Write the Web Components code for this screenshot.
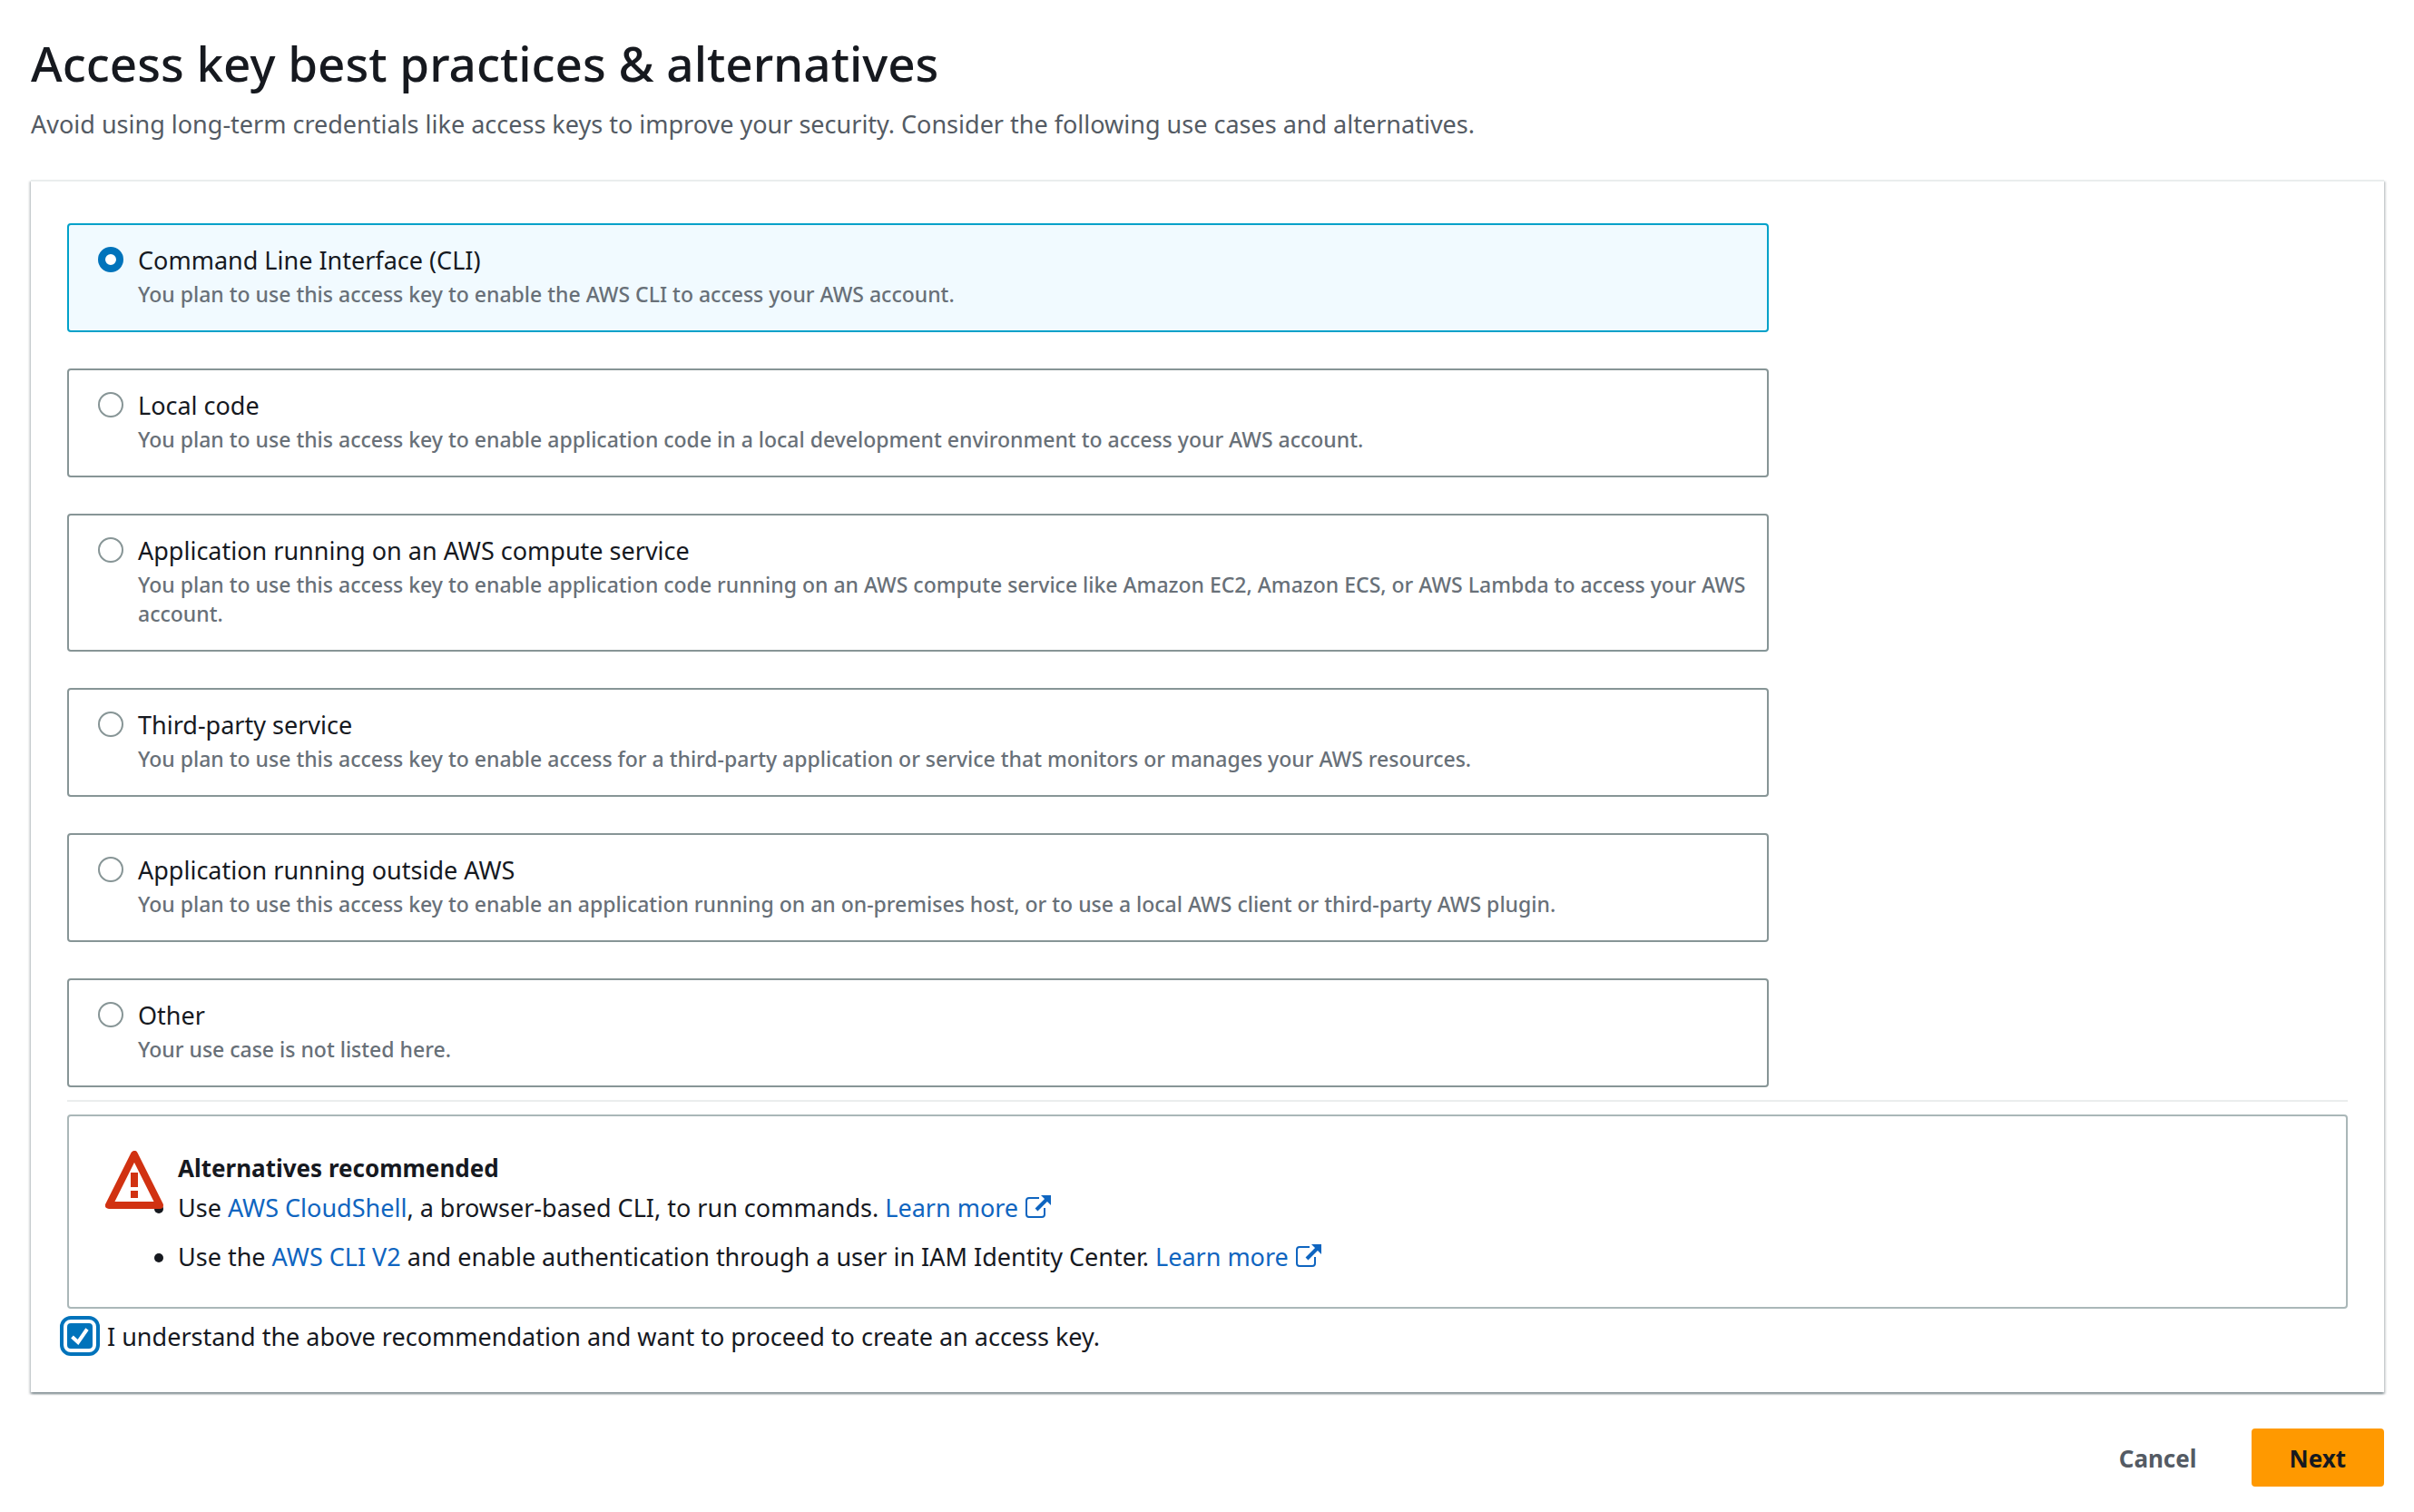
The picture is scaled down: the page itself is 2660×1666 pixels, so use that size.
<!DOCTYPE html>
<html lang="en">
<head>
<meta charset="utf-8">
<meta name="viewport" content="width=device-width, initial-scale=1">
<title>Access key best practices &amp; alternatives</title>
<style>
  body {
    margin: 0;
    background: #fff;
    color: #16191f;
    font-family: "Noto Sans", "Open Sans", sans-serif;
    font-size: 27px;
    line-height: 44px;
  }
</style>
</head>
<body>
<access-key-page></access-key-page>

<template id="access-key-page">
  <style>
    :host { display: block; padding: 34px 33px 28px 34px; }
    main { display: flex; flex-direction: column; gap: 40px; }
    .options { display: flex; flex-direction: column; gap: 40px; width: calc(75% - 10px); }
    hr { margin: 14px 0; border: 0; border-top: 2px solid #eaeded; }
    confirm-box { margin-top: 9px; }
    footer { display: flex; justify-content: flex-end; gap: 18px; }
  </style>
  <main>
    <page-header>
      Access key best practices &amp; alternatives
      <span slot="description">Avoid using long-term credentials like access keys to improve your security. Consider the following use cases and alternatives.</span>
    </page-header>
    <content-card>
      <div class="options" role="radiogroup" aria-label="Use case">
        <option-tile checked>Command Line Interface (CLI)<span slot="description">You plan to use this access key to enable the AWS CLI to access your AWS account.</span></option-tile>
        <option-tile>Local code<span slot="description">You plan to use this access key to enable application code in a local development environment to access your AWS account.</span></option-tile>
        <option-tile>Application running on an AWS compute service<span slot="description">You plan to use this access key to enable application code running on an AWS compute service like Amazon EC2, Amazon ECS, or AWS Lambda to access your AWS account.</span></option-tile>
        <option-tile>Third-party service<span slot="description">You plan to use this access key to enable access for a third-party application or service that monitors or manages your AWS resources.</span></option-tile>
        <option-tile>Application running outside AWS<span slot="description">You plan to use this access key to enable an application running on an on-premises host, or to use a local AWS client or third-party AWS plugin.</span></option-tile>
        <option-tile>Other<span slot="description">Your use case is not listed here.</span></option-tile>
      </div>
      <hr>
      <recommendation-alert>
        <span slot="heading">Alternatives recommended</span>
        <recommendation-item>Use <text-link>AWS CloudShell</text-link>, a browser-based CLI, to run commands. <text-link external>Learn more</text-link></recommendation-item>
        <recommendation-item>Use the <text-link>AWS CLI V2</text-link> and enable authentication through a user in IAM Identity Center. <text-link external>Learn more</text-link></recommendation-item>
      </recommendation-alert>
      <confirm-box>I understand the above recommendation and want to proceed to create an access key.</confirm-box>
    </content-card>
    <footer>
      <action-button>Cancel</action-button>
      <action-button variant="primary">Next</action-button>
    </footer>
  </main>
</template>

<template id="page-header">
  <style>
    :host { display: block; }
    h1 { margin: 0 0 10px; font-size: 53px; line-height: 72px; font-weight: 500; }
    p { margin: 0; color: #545b64; line-height: 42px; }
  </style>
  <h1><slot></slot></h1>
  <p><slot name="description"></slot></p>
</template>

<template id="content-card">
  <style>
    :host {
      display: block;
      padding: 46px 40px 39px;
      border-top: 2px solid #eaeded;
      background: #fff;
      box-shadow: 0 2px 2px rgba(0, 28, 36, .3), 2px 2px 2px rgba(0, 28, 36, .15), -2px 2px 2px rgba(0, 28, 36, .15);
    }
  </style>
  <slot></slot>
</template>

<template id="option-tile">
  <style>
    :host {
      display: block;
      border: 2px solid #879596;
      border-radius: 4px;
      background: #fff;
    }
    :host([checked]) { border-color: #00a1c9; background: #f1faff; }
    label { display: flex; gap: 16px; padding: 18px 16px 24px 32px; line-height: 42px; cursor: pointer; }
    input {
      appearance: none;
      flex: none;
      width: 28px;
      height: 28px;
      margin: 6px 0 0;
      border: 2px solid #879596;
      border-radius: 50%;
      background: #fff;
    }
    input:checked { border: 8px solid #0073bb; }
    .text { display: flex; flex-direction: column; }
    .description { color: #687078; font-size: 23px; font-weight: 500; line-height: 32px; }
  </style>
  <label>
    <input type="radio">
    <span class="text">
      <span><slot></slot></span>
      <span class="description"><slot name="description"></slot></span>
    </span>
  </label>
</template>

<template id="recommendation-alert">
  <style>
    :host {
      display: flex;
      gap: 16px;
      padding: 35px 40px 33px;
      border: 2px solid #aab7b8;
      border-radius: 4px;
    }
    svg { position: relative; z-index: 1; flex: none; width: 64px; height: 64px; margin-top: 3px; }
    strong { display: block; font-size: 26px; font-weight: 700; }
    .list { display: flex; flex-direction: column; gap: 10px; }
  </style>
  <svg viewBox="0 0 64 64" aria-hidden="true">
    <path d="M32 4 4 60H60Z" fill="#fff" stroke="#d13212" stroke-width="8" stroke-linejoin="round"/>
    <path d="M32 24V40M32 44V52" fill="none" stroke="#d13212" stroke-width="8"/>
  </svg>
  <div>
    <strong><slot name="heading"></slot></strong>
    <div class="list" role="list"><slot></slot></div>
  </div>
</template>

<template id="recommendation-item">
  <style>
    :host { display: list-item; list-style: disc outside; }
  </style>
  <slot></slot>
</template>

<template id="text-link"><style>
    :host { display: inline; }
    a { color: #0f65c0; text-decoration: none; }
    svg { display: none; width: 32px; height: 32px; margin-left: 5px; vertical-align: -4px; }
    :host([external]) svg { display: inline-block; }
  </style><a href="#"><slot></slot><svg viewBox="0 0 32 32" aria-hidden="true"><path d="M18 7H7Q4 7 4 10V25Q4 28 7 28H21Q24 28 24 25V18" fill="none" stroke="currentColor" stroke-width="2"/><path d="M15 20 27 8" fill="none" stroke="currentColor" stroke-width="4"/><path d="M20 4H31V15Z" fill="currentColor"/></svg></a></template>

<template id="confirm-box">
  <style>
    :host { display: block; }
    label { display: flex; gap: 16px; cursor: pointer; }
    input {
      appearance: none;
      width: 28px;
      height: 28px;
      margin: 7px 0 0;
      border: 2px solid #879596;
      border-radius: 4px;
      outline: 4px solid #0073bb;
      outline-offset: 4px;
    }
    input:checked { border-color: #0073bb; background: #0073bb; }
    .box { display: grid; align-content: start; }
    .box > * { grid-area: 1 / 1; }
    svg { width: 28px; height: 28px; margin-top: 7px; pointer-events: none; }
    input:not(:checked) + svg { visibility: hidden; }
  </style>
  <label>
    <span class="box">
      <input type="checkbox" checked>
      <svg viewBox="0 0 28 28" aria-hidden="true"><path d="M5.500 15 12 21 22 6.500" fill="none" stroke="#fff" stroke-width="4"/></svg>
    </span>
    <span><slot></slot></span>
  </label>
</template>

<template id="action-button">
  <style>
    :host { display: block; }
    button {
      height: 64px;
      padding: 2px 40px 0;
      border: 2px solid transparent;
      border-radius: 4px;
      background: transparent;
      color: #545b64;
      font: inherit;
      font-size: 26px;
      font-weight: 700;
      cursor: pointer;
    }
    :host([variant="primary"]) button { border-color: #ff9900; background: #ff9900; color: #16191f; }
  </style>
  <button type="button"><slot></slot></button>
</template>

<script>
  class TemplateElement extends HTMLElement {
    constructor() {
      super();
      const template = document.getElementById(this.localName);
      this.attachShadow({ mode: "open" }).append(template.content.cloneNode(true));
    }
  }

  class OptionTile extends TemplateElement {
    static observedAttributes = ["checked"];

    connectedCallback() {
      this.shadowRoot.querySelector("input").addEventListener("change", () => {
        for (const tile of this.parentElement.querySelectorAll("option-tile")) {
          tile.toggleAttribute("checked", tile === this);
        }
      });
    }

    attributeChangedCallback() {
      this.shadowRoot.querySelector("input").checked = this.hasAttribute("checked");
    }
  }

  class RecommendationItem extends TemplateElement {
    connectedCallback() {
      this.setAttribute("role", "listitem");
    }
  }

  customElements.define("option-tile", OptionTile);
  customElements.define("recommendation-item", RecommendationItem);
  for (const name of ["page-header", "content-card", "recommendation-alert", "text-link", "confirm-box", "action-button", "access-key-page"]) {
    customElements.define(name, class extends TemplateElement {});
  }
</script>
</body>
</html>
